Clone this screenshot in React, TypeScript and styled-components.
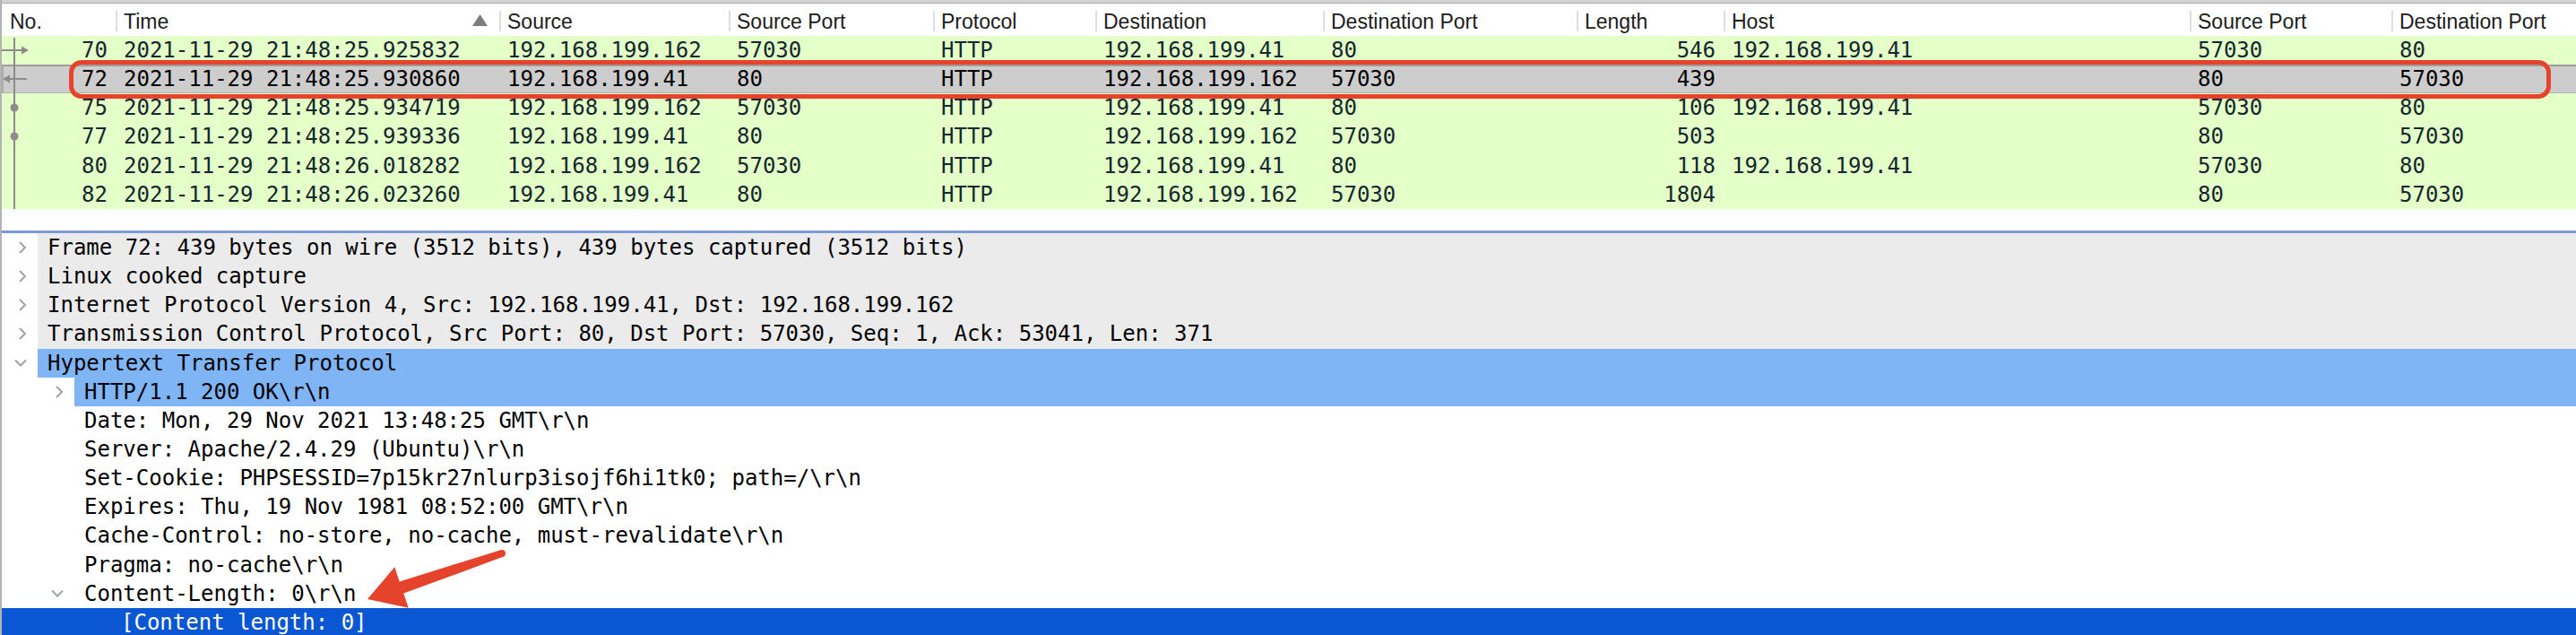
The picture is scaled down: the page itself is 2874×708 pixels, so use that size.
import React from 'react';
import styled, { createGlobalStyle, css } from 'styled-components';

const GlobalStyle = createGlobalStyle`
  html, body { margin: 0; padding: 0; background: #ffffff; }
  body { overflow: hidden; }
  #root { width: 2874px; height: 708px; }
`;

const ROW_H = '32.15px';
const COLS = '127px 428px 256px 228px 181px 254px 283px 164px 520px 225px 1fr';
const MONO = '"DejaVu Sans Mono", Menlo, monospace';
const SANS = '"Liberation Sans", Arial, sans-serif';

const Window = styled.div`
  position: relative;
  box-sizing: border-box;
  width: 2874px;
  height: 708px;
  overflow: hidden;
  border-left: 2px solid #b3b3b3;
  background: #ffffff;
  display: flex;
  flex-direction: column;
`;

const TopBand = styled.div`
  flex: none;
  height: 3px;
  background: #d2d2d2;
  border-bottom: 1px solid #a9a9a9;
`;

const PacketList = styled.section`
  flex: none;
  height: 253px;
  display: flex;
  flex-direction: column;
`;

const HeaderRow = styled.div`
  flex: none;
  display: grid;
  grid-template-columns: ${COLS};
  height: 36px;
  background: #ffffff;
  font-family: ${SANS};
  font-size: 23px;
  color: #1c1c1c;
`;

const HeaderCell = styled.div<{ $first?: boolean }>`
  position: relative;
  box-sizing: border-box;
  display: flex;
  align-items: center;
  justify-content: space-between;
  padding: 5px 13px 0 9px;
  white-space: nowrap;
  overflow: hidden;
  ${(p) =>
    !p.$first &&
    css`
      &::before {
        content: '';
        position: absolute;
        left: 0;
        top: 8px;
        bottom: 5px;
        width: 2px;
        background: #dedede;
      }
    `}
`;

const SortMark = styled.svg`
  flex: none;
  margin-top: -4px;
`;

const PacketRow = styled.div<{ $selected?: boolean }>`
  flex: none;
  display: grid;
  grid-template-columns: ${COLS};
  height: ${ROW_H};
  align-items: center;
  font-family: ${MONO};
  font-size: 24px;
  background: ${(p) => (p.$selected ? '#cdcdcd' : '#e4ffc7')};
  color: ${(p) => (p.$selected ? '#000000' : '#12272e')};
  ${(p) =>
    p.$selected &&
    css`
      box-shadow: inset 0 2px 0 #9d9d9d, inset 2px 0 0 #ababab, inset 0 -1px 0 #b3b3b3;
    `}
`;

const Cell = styled.div<{ $right?: boolean }>`
  box-sizing: border-box;
  padding: 0 9px;
  white-space: nowrap;
  overflow: hidden;
  text-align: ${(p) => (p.$right ? 'right' : 'left')};
`;

const NoCell = styled.div`
  box-sizing: border-box;
  align-self: stretch;
  display: flex;
  align-items: center;
  padding-right: 9px;
  white-space: nowrap;
`;

const FlowMark = styled.svg`
  flex: none;
  align-self: flex-start;
  overflow: visible;
`;

const NoText = styled.span`
  flex: 1;
  text-align: right;
`;

const ListFiller = styled.div`
  flex: 1;
  background: #ffffff;
`;

const Splitter = styled.div`
  flex: none;
  height: 3px;
  background: #7b9ad6;
`;

const DetailTree = styled.section`
  flex: 1;
  display: flex;
  flex-direction: column;
  overflow: hidden;
`;

type Tone = 'plain' | 'gray' | 'related';

const DetailRow = styled.div<{ $selected?: boolean }>`
  flex: none;
  display: flex;
  align-items: stretch;
  height: ${ROW_H};
  font-family: ${MONO};
  font-size: 24px;
  background: ${(p) => (p.$selected ? '#0b56d2' : 'transparent')};
  color: ${(p) => (p.$selected ? '#ffffff' : '#000000')};
`;

const Indent = styled.div<{ $level: number }>`
  flex: none;
  width: ${(p) => p.$level * 41}px;
`;

const Toggle = styled.div`
  flex: none;
  box-sizing: border-box;
  width: 40px;
  padding-right: 12px;
  display: flex;
  align-items: center;
  justify-content: flex-end;
`;

const Label = styled.div<{ $tone: Tone }>`
  flex: 1;
  display: flex;
  align-items: center;
  padding-left: 11px;
  white-space: pre;
  background: ${(p) =>
    p.$tone === 'gray' ? '#ebebeb' : p.$tone === 'related' ? '#7fb4f5' : 'transparent'};
`;

const Callout = styled.div`
  position: absolute;
  left: 75px;
  top: 67px;
  width: 2769px;
  height: 43px;
  box-sizing: border-box;
  border: 5px solid #e5432c;
  border-radius: 14px;
  pointer-events: none;
`;

const ArrowMark = styled.svg`
  position: absolute;
  left: 398px;
  top: 605px;
  pointer-events: none;
`;

type Mark = 'request' | 'response' | 'dot' | 'line';

interface Packet {
  no: number;
  time: string;
  src: string;
  sport: string;
  dst: string;
  dport: string;
  len: string;
  host: string;
  mark: Mark;
  selected?: boolean;
}

const packets: Packet[] = [
  { no: 70, time: '2021-11-29 21:48:25.925832', src: '192.168.199.162', sport: '57030', dst: '192.168.199.41', dport: '80', len: '546', host: '192.168.199.41', mark: 'request' },
  { no: 72, time: '2021-11-29 21:48:25.930860', src: '192.168.199.41', sport: '80', dst: '192.168.199.162', dport: '57030', len: '439', host: '', mark: 'response', selected: true },
  { no: 75, time: '2021-11-29 21:48:25.934719', src: '192.168.199.162', sport: '57030', dst: '192.168.199.41', dport: '80', len: '106', host: '192.168.199.41', mark: 'dot' },
  { no: 77, time: '2021-11-29 21:48:25.939336', src: '192.168.199.41', sport: '80', dst: '192.168.199.162', dport: '57030', len: '503', host: '', mark: 'dot' },
  { no: 80, time: '2021-11-29 21:48:26.018282', src: '192.168.199.162', sport: '57030', dst: '192.168.199.41', dport: '80', len: '118', host: '192.168.199.41', mark: 'line' },
  { no: 82, time: '2021-11-29 21:48:26.023260', src: '192.168.199.41', sport: '80', dst: '192.168.199.162', dport: '57030', len: '1804', host: '', mark: 'line' },
];

interface Node {
  level: number;
  toggle: 'none' | 'closed' | 'open';
  tone: Tone;
  text: string;
  selected?: boolean;
}

const nodes: Node[] = [
  { level: 0, toggle: 'closed', tone: 'gray', text: 'Frame 72: 439 bytes on wire (3512 bits), 439 bytes captured (3512 bits)' },
  { level: 0, toggle: 'closed', tone: 'gray', text: 'Linux cooked capture' },
  { level: 0, toggle: 'closed', tone: 'gray', text: 'Internet Protocol Version 4, Src: 192.168.199.41, Dst: 192.168.199.162' },
  { level: 0, toggle: 'closed', tone: 'gray', text: 'Transmission Control Protocol, Src Port: 80, Dst Port: 57030, Seq: 1, Ack: 53041, Len: 371' },
  { level: 0, toggle: 'open', tone: 'related', text: 'Hypertext Transfer Protocol' },
  { level: 1, toggle: 'closed', tone: 'related', text: 'HTTP/1.1 200 OK\\r\\n' },
  { level: 1, toggle: 'none', tone: 'plain', text: 'Date: Mon, 29 Nov 2021 13:48:25 GMT\\r\\n' },
  { level: 1, toggle: 'none', tone: 'plain', text: 'Server: Apache/2.4.29 (Ubuntu)\\r\\n' },
  { level: 1, toggle: 'none', tone: 'plain', text: 'Set-Cookie: PHPSESSID=7p15kr27nlurp3isojf6hi1tk0; path=/\\r\\n' },
  { level: 1, toggle: 'none', tone: 'plain', text: 'Expires: Thu, 19 Nov 1981 08:52:00 GMT\\r\\n' },
  { level: 1, toggle: 'none', tone: 'plain', text: 'Cache-Control: no-store, no-cache, must-revalidate\\r\\n' },
  { level: 1, toggle: 'none', tone: 'plain', text: 'Pragma: no-cache\\r\\n' },
  { level: 1, toggle: 'open', tone: 'plain', text: 'Content-Length: 0\\r\\n' },
  { level: 2, toggle: 'none', tone: 'plain', text: '[Content length: 0]', selected: true },
];

const GRAY = '#8c8c8c';

function Flow({ mark, first, last }: { mark: Mark; first: boolean; last: boolean }) {
  return (
    <FlowMark width={34} height={32} viewBox="0 0 34 32">
      <rect x={13} y={first ? 2 : 0} width={2} height={last ? 35 : first ? 31 : 33} fill={GRAY} />
      {mark === 'request' && (
        <>
          <rect x={0} y={15} width={24} height={2} fill={GRAY} />
          <polygon points="22,11.5 30,16 22,20.5" fill={GRAY} />
        </>
      )}
      {mark === 'response' && (
        <>
          <rect x={8} y={15} width={20} height={2} fill={GRAY} />
          <polygon points="1,16 9,11.5 9,20.5" fill={GRAY} />
        </>
      )}
      {mark === 'dot' && <circle cx={14} cy={16} r={4.5} fill={GRAY} />}
    </FlowMark>
  );
}

function Chevron({ open }: { open: boolean }) {
  return open ? (
    <svg width={14} height={9} viewBox="0 0 14 9">
      <polyline points="1,1.5 7,7.5 13,1.5" fill="none" stroke="#a3a3a3" strokeWidth={2} />
    </svg>
  ) : (
    <svg width={10} height={14} viewBox="0 0 10 14">
      <polyline points="2,1 8,7 2,13" fill="none" stroke="#a3a3a3" strokeWidth={2} />
    </svg>
  );
}

const headers = [
  'No.', 'Time', 'Source', 'Source Port', 'Protocol', 'Destination',
  'Destination Port', 'Length', 'Host', 'Source Port', 'Destination Port',
];

export default function App() {
  return (
    <>
      <GlobalStyle />
      <Window>
        <TopBand />
        <PacketList>
          <HeaderRow>
            {headers.map((h, i) => (
              <HeaderCell key={i} $first={i === 0}>
                <span>{h}</span>
                {h === 'Time' && (
                  <SortMark width={17} height={13} viewBox="0 0 17 13">
                    <polygon points="0,13 8.5,0 17,13" fill="#7d7d7d" />
                  </SortMark>
                )}
              </HeaderCell>
            ))}
          </HeaderRow>
          {packets.map((p, i) => (
            <PacketRow key={p.no} $selected={p.selected}>
              <NoCell>
                <Flow mark={p.mark} first={i === 0} last={i === packets.length - 1} />
                <NoText>{p.no}</NoText>
              </NoCell>
              <Cell>{p.time}</Cell>
              <Cell>{p.src}</Cell>
              <Cell>{p.sport}</Cell>
              <Cell>HTTP</Cell>
              <Cell>{p.dst}</Cell>
              <Cell>{p.dport}</Cell>
              <Cell $right>{p.len}</Cell>
              <Cell>{p.host}</Cell>
              <Cell>{p.sport}</Cell>
              <Cell>{p.dport}</Cell>
            </PacketRow>
          ))}
          <ListFiller />
        </PacketList>
        <Splitter />
        <DetailTree>
          {nodes.map((n, i) => (
            <DetailRow key={i} $selected={n.selected}>
              <Indent $level={n.level} />
              <Toggle>{n.toggle !== 'none' && <Chevron open={n.toggle === 'open'} />}</Toggle>
              <Label $tone={n.tone}>{n.text}</Label>
            </DetailRow>
          ))}
        </DetailTree>
        <Callout />
        <ArrowMark width={175} height={80} viewBox="0 0 175 80">
          <polygon
            points="10,63 40.3,27.3 45.7,43.4 158.7,8.2 161.3,15.8 50.3,56.6 55.7,72.7"
            fill="#e5432c"
          />
          <circle cx={160} cy={12} r={4} fill="#e5432c" />
        </ArrowMark>
      </Window>
    </>
  );
}
